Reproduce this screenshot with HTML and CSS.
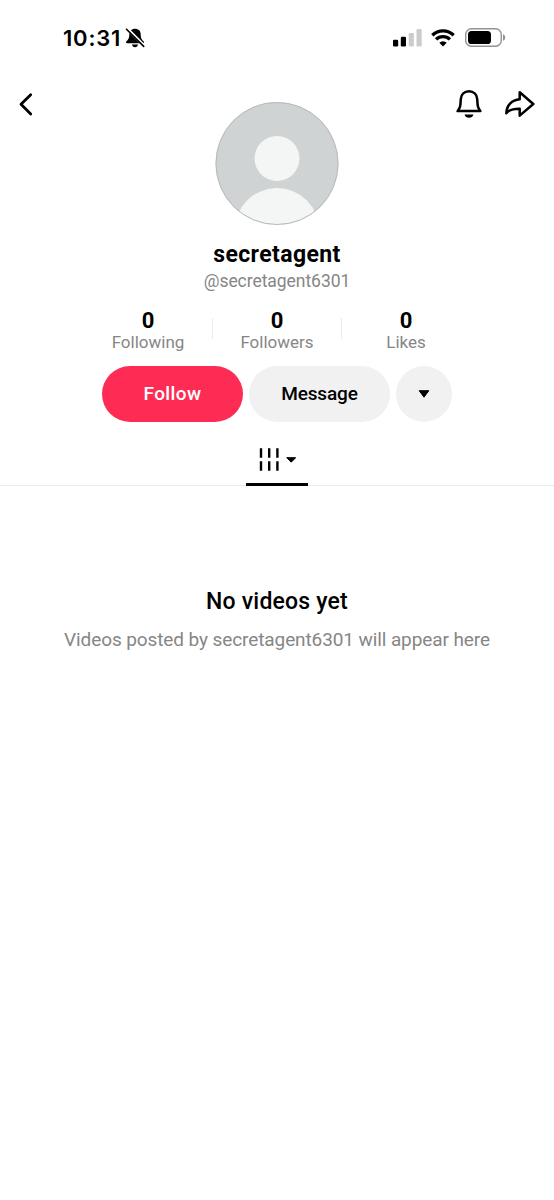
FILE: index.html
```html
<!DOCTYPE html>
<html lang="en">
<head>
<meta charset="utf-8">
<title>secretagent</title>
<link rel="stylesheet" href="styles.css">
</head>
<body>
<div class="status">
  <span class="time">10:31</span>
  <svg class="mute" width="20" height="20" viewBox="0 0 20 20"><path d="M10 .8C6.500.8 4.300 3 4.300 6.400c0 3.900-1.300 5.200-2.900 6.900-.8.900-.4 2 .8 2h15.600c1.200 0 1.600-1.100.8-2-1.600-1.700-2.900-3-2.900-6.900C15.700 3 13.500.8 10 .8ZM7 16.500h6c-.2 1.600-1.400 2.700-3 2.700s-2.800-1.100-3-2.700Z"/><path d="M2.600 1.100 19.600 18.100" stroke="#fff" stroke-width="3"/><path d="M1.500 1.200 18.700 18.400" stroke="#000" stroke-width="1.600" stroke-linecap="round"/></svg>
  <svg class="signal" width="29" height="18" viewBox="0 0 29 18"><rect x="0" y="10.800" width="5.200" height="6.700" rx="1.300"/><rect x="7.800" y="7.700" width="5.200" height="9.800" rx="1.300"/><rect x="15.700" y="4" width="5.200" height="13.500" rx="1.300" fill="#ccc"/><rect x="23.500" y="0" width="5.200" height="17.500" rx="1.300" fill="#ccc"/></svg>
  <svg class="wifi" width="24" height="18" viewBox="0 0 24 18" fill="none" stroke="#000" stroke-width="3.300"><path d="M1.300 6.200a15.300 15.300 0 0 1 21.400 0"/><path d="M5.100 10.400a9.800 9.800 0 0 1 13.800 0"/><path d="M8.300 13.800a5.300 5.300 0 0 1 7.400 0L12 17.500Z" fill="#000" stroke="none"/></svg>
  <svg class="battery" width="41" height="19" viewBox="0 0 41 19"><rect x=".75" y=".75" width="35.500" height="17.500" rx="5.600" fill="none" stroke="#929292" stroke-width="1.400"/><rect x="3" y="3" width="23" height="13" rx="3.600"/><path d="M38 6.300c1.500.5 2.200 1.700 2.200 3.200s-.7 2.700-2.200 3.200Z" fill="#929292"/></svg>
</div>
<header class="nav">
  <svg class="back" width="16" height="26" viewBox="0 0 16 26"><path d="M12.700 3.700 3 13.300l9.700 9.600" fill="none" stroke="#000" stroke-width="2.800" stroke-linecap="round" stroke-linejoin="round"/></svg>
  <svg class="avatar" width="124" height="124" viewBox="0 0 124 124"><defs><clipPath id="disc"><circle cx="62" cy="61.500" r="61.500"/></clipPath></defs><g clip-path="url(#disc)"><path fill="#d0d3d4" d="M0 0h124v124H0z"/><circle cx="62" cy="56.500" r="22.500" fill="#f4f5f5"/><circle cx="62" cy="128" r="42" fill="#f4f5f5"/></g><circle cx="62" cy="61.500" r="61" fill="none" stroke="#b9bbbb"/></svg>
  <svg class="bell" width="28" height="30" viewBox="0 0 28 30"><path d="M14 2.300c-4.600 0-7.900 3.200-8.200 7.700l-.4 5.700c-.1 1.500-.6 3-1.400 4.300L2.600 22.100h22.800L24 20c-.8-1.300-1.300-2.800-1.400-4.300l-.4-5.700c-.3-4.500-3.600-7.700-8.200-7.700Z" fill="none" stroke="#000" stroke-width="2.500" stroke-linejoin="round"/><path d="M9.500 25.400h9c-.4 2-2.200 3.300-4.500 3.300s-4.100-1.300-4.500-3.300Z"/></svg>
  <svg class="share" width="32" height="30" viewBox="0 0 32 30"><path d="M15.700 3.200 29.300 15 15.700 26.600V19.700C9.500 19.600 5 20.700 2.300 24.200 2.600 16 8.100 11 15.700 10.300Z" fill="none" stroke="#000" stroke-width="2.500" stroke-linejoin="round"/></svg>
</header>
<main>
  <h1 class="name">secretagent</h1>
  <p class="handle">@secretagent6301</p>
  <div class="stats">
    <div class="stat"><b>0</b><span>Following</span></div>
    <div class="stat"><b>0</b><span>Followers</span></div>
    <div class="stat"><b>0</b><span>Likes</span></div>
  </div>
  <div class="actions">
    <button class="follow">Follow</button>
    <button class="message">Message</button>
    <button class="more" aria-label="More"><svg width="12" height="8" viewBox="0 0 12 8"><path d="M1.200.7h9.600L6 7.200Z" stroke="#000" stroke-linejoin="round"/></svg></button>
  </div>
  <nav class="tabs"><div class="tab">
    <svg width="38" height="24" viewBox="0 0 38 24"><path d="M3 .3v9.500M11.200.3v9.500M19.400.3v9.500M3 13.200v9.500M11.200 13.200v9.500M19.400 13.200v9.500" stroke="#000" stroke-width="2.400"/><path d="M28.700 9.700h9L33.200 14.200Z" stroke="#000" stroke-linejoin="round"/></svg>
  </div></nav>
  <section class="empty"><h2>No videos yet</h2><p>Videos posted by secretagent6301 will appear here</p></section>
</main>
</body>
</html>
```
FILE: styles.css
```css
* { box-sizing: border-box; }
body { margin: 0; background: #fff; color: #000; font-family: Roboto, "Noto Sans", sans-serif; min-height: 1200px; }
h1, h2, p { margin: 0; white-space: nowrap; }
svg { display: block; flex: none; }
.status { height: 75px; display: flex; align-items: center; padding-left: 63px; }
.time { font: 600 22px/28px Inter, sans-serif; width: 62px; letter-spacing: .8px; white-space: nowrap; }
.mute { margin-top: 1px; }
.signal { margin-left: 248px; }
.wifi { margin-left: 9px; }
.battery { margin-left: 10px; }
.nav { height: 151px; display: flex; align-items: flex-start; padding: 14px 18px 0; }
.back { margin-top: 2px; }
.avatar { margin: 13px 0 0 181px; }
.bell { margin-left: 116px; }
.share { margin-left: 21px; }
main { text-align: center; }
.name { height: 43px; padding-top: 15px; font-size: 23px; line-height: 28px; font-weight: 700; letter-spacing: .4px; }
.handle { height: 38px; font-size: 17.5px; line-height: 24px; color: #868686; letter-spacing: -.05px; }
.stats { height: 59px; display: flex; justify-content: center; }
.stat { width: 129px; display: flex; flex-direction: column; position: relative; }
.stat + .stat::before { content: ""; position: absolute; left: -1px; top: 11px; width: 1px; height: 21px; background: #ebebeb; }
.stat b { font-size: 22px; line-height: 27px; height: 26px; padding-top: 1px; }
.stat b { line-height: 26px; }
.stat span { margin-top: -1px; font-size: 17px; line-height: 20px; color: #868686; }
.actions { height: 56px; display: flex; justify-content: center; gap: 6px; }
button { border: 0; padding: 0; height: 56px; border-radius: 28px; background: #f1f1f1; color: #000; font: 500 19px/56px Roboto, sans-serif; }
.follow, .message { width: 141px; }
.message { letter-spacing: -.15px; }
.follow { background: #fe2c55; color: #fff; letter-spacing: .4px; }
.more { width: 56px; display: flex; align-items: center; justify-content: center; }
.tabs { height: 64px; display: flex; justify-content: center; border-bottom: 1px solid #ebebeb; }
.tab { width: 62px; height: 64px; padding: 26px 0 0 12px; border-bottom: 3px solid #000; }
.empty { padding-top: 101px; }
.empty h2 { font-size: 23px; line-height: 30px; font-weight: 500; letter-spacing: .2px; }
.empty p { margin-top: 10px; font-size: 19px; line-height: 26px; color: #868686; letter-spacing: -.1px; }
```
